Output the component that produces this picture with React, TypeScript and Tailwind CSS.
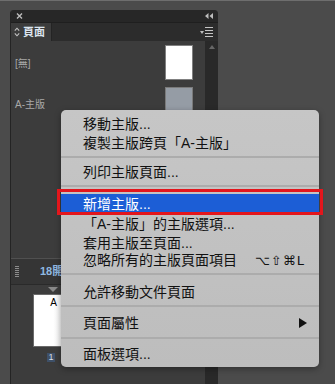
import React from "react";

type Row =
  | { kind: "item"; h: string; label: string; shortcut?: string; arrow?: boolean; active?: boolean }
  | { kind: "sep"; h: string; pt: string };

const rows: Row[] = [
  { kind: "item", h: "h-[19px]", label: "移動主版..." },
  { kind: "item", h: "h-[19px]", label: "複製主版跨頁「A-主版」" },
  { kind: "sep", h: "h-[10px]", pt: "pt-[4px]" },
  { kind: "item", h: "h-[20px]", label: "列印主版頁面..." },
  { kind: "sep", h: "h-[11px]", pt: "pt-[3px]" },
  { kind: "item", h: "h-[21px]", label: "新增主版...", active: true },
  { kind: "item", h: "h-[20px]", label: "「A-主版」的主版選項..." },
  { kind: "item", h: "h-[17px]", label: "套用主版至頁面..." },
  { kind: "item", h: "h-[18px]", label: "忽略所有的主版頁面項目", shortcut: "⌥⇧⌘L" },
  { kind: "sep", h: "h-[13px]", pt: "pt-[4px]" },
  { kind: "item", h: "h-[20px]", label: "允許移動文件頁面" },
  { kind: "sep", h: "h-[12px]", pt: "pt-[3px]" },
  { kind: "item", h: "h-[18px]", label: "頁面屬性", arrow: true },
  { kind: "sep", h: "h-[12px]", pt: "pt-[5px]" },
  { kind: "item", h: "h-[20px]", label: "面板選項..." },
];

export default function App() {
  return (
    <div className="relative w-[335px] h-[384px] overflow-hidden bg-[#4b4b4b] border-t border-[#6e6e6e] pl-[10px] pt-[9px] font-['Liberation_Sans','Noto_Sans_CJK_TC',sans-serif]">
      {/* Panel */}
      <div className="w-[208px] h-[380px] flex flex-col rounded-t-[4px] overflow-hidden bg-[#3c3c3c] border-l border-[#242424]">
        {/* title bar */}
        <div className="h-[12px] bg-[#272727] flex items-center justify-between pl-[5px] pr-[5px]">
          <svg width="7" height="6" viewBox="0 0 7 6">
            <path d="M1 0.5 L6 5.5 M6 0.5 L1 5.5" stroke="#bdbdbd" strokeWidth="1.4" />
          </svg>
          <svg width="8" height="6" viewBox="0 0 8 6">
            <path d="M0 3 L3.5 0 L3.5 6 Z M4.5 3 L8 0 L8 6 Z" fill="#bdbdbd" />
          </svg>
        </div>
        {/* tab row */}
        <div className="h-[19px] bg-[#2c2c2c] flex items-stretch border-t border-[#1f1f1f]">
          <div className="w-[41px] bg-[#3c3c3c] flex items-center gap-[3px] pl-[3px] border-r border-[#242424]">
            <svg width="6" height="10" viewBox="0 0 6 10">
              <path d="M0.8 3.6 L3 1.2 L5.2 3.6 M0.8 6.4 L3 8.8 L5.2 6.4" stroke="#c4c4c4" strokeWidth="1.1" fill="none" />
            </svg>
            <span className="text-[11px] leading-none font-bold text-[#dbe4ee]">頁面</span>
          </div>
          <div className="flex-1 flex items-center justify-end pr-[5px] gap-[1px]">
            <svg width="4" height="3" viewBox="0 0 4 3">
              <path d="M0 0 L4 0 L2 3 Z" fill="#bdbdbd" />
            </svg>
            <div className="flex flex-col gap-[2px]">
              <div className="w-[8px] h-[1px] bg-[#c4c4c4]" />
              <div className="w-[8px] h-[1px] bg-[#c4c4c4]" />
              <div className="w-[8px] h-[1px] bg-[#c4c4c4]" />
              <div className="w-[8px] h-[1px] bg-[#c4c4c4]" />
            </div>
          </div>
        </div>
        {/* body */}
        <div className="flex-1 flex">
          <div className="flex-1 flex flex-col">
            {/* masters */}
            <div className="h-[217px] flex flex-col">
              <div className="h-[42px] flex items-center justify-between pl-[4px] pr-[12px]">
                <span className="text-[10px] text-[#a9a9a9] mt-[3px]">[無]</span>
                <div className="w-[28px] h-[35px] bg-white border border-[#808080]" />
              </div>
              <div className="h-[42px] flex items-center justify-between pl-[4px] pr-[12px]">
                <span className="text-[10px] text-[#a9a9a9]">A-主版</span>
                <div className="w-[28px] h-[35px] bg-[#959ca5] border border-[#7a7a7a]" />
              </div>
            </div>
            {/* divider row */}
            <div className="h-[27px] bg-[#353535] border-t border-[#505050] border-b border-b-[#2a2a2a] flex items-center pl-[4px] gap-[21px]">
              <svg width="4" height="11" viewBox="0 0 4 11">
                {[0, 2, 4, 6, 8, 10].map((y) => (
                  <rect key={y} x="0" y={y} width="4" height="1" fill="#8c8c8c" />
                ))}
              </svg>
              <span className="w-[21px] overflow-hidden text-[11px] font-bold text-[#8fb9e2] whitespace-nowrap">18開</span>
            </div>
            {/* pages */}
            <div className="flex-1 flex flex-col pl-[22px] pt-[2px]">
              <svg width="10" height="5" viewBox="0 0 10 5" className="ml-[15px]">
                <path d="M0 0 L10 0 L5 5 Z" fill="#8a8a8a" />
              </svg>
              <div className="mt-[2px] w-[40px] h-[53px] bg-gradient-to-r from-white via-white to-[#e2e2e2] border border-[#6a6a6a] flex justify-center">
                <span className="text-[10px] leading-none text-black mt-[3px] ml-[1px]">A</span>
              </div>
              <div className="mt-[6px] ml-[14px] w-[8px] h-[9px] bg-[#3e5068] flex items-center justify-center">
                <span className="text-[9px] leading-none text-[#d8dde4]">1</span>
              </div>
            </div>
          </div>
          {/* scrollbar */}
          <div className="w-[13px] bg-[#292929] flex justify-center pt-[4px]">
            <svg width="6" height="4" viewBox="0 0 6 4">
              <path d="M0 4 L3 0 L6 4 Z" fill="#666" />
            </svg>
          </div>
        </div>
      </div>

      {/* Context menu */}
      <div className="absolute left-[61px] top-[109px] w-[258px] h-[257px] rounded-[5px] bg-gradient-to-b from-[#c6c6c6] to-[#bdbdbd] shadow-[0_2px_6px_rgba(0,0,0,0.35)] pt-[4px] flex flex-col">
        {rows.map((r, i) =>
          r.kind === "sep" ? (
            <div key={i} className={`${r.h} ${r.pt}`}>
              <div className="h-[2px] bg-[#acacac]" />
            </div>
          ) : (
            <div key={i} className={`${r.h} flex items-stretch`}>
              <div
                className={`flex-1 flex items-center pl-[22px] pr-[14px] text-[14px] leading-none ${
                  r.active ? "bg-[#1c5ed6] text-white my-[1px]" : "text-[#111]"
                }`}
              >
                <span className="flex-1 whitespace-nowrap">{r.label}</span>
                {r.shortcut && (
                  <span className="font-['DejaVu_Sans',sans-serif] text-[13px] tracking-[1px]">{r.shortcut}</span>
                )}
                {r.arrow && (
                  <svg width="8" height="10" viewBox="0 0 8 10" className="mr-[-2px]">
                    <path d="M0 0 L8 5 L0 10 Z" fill="#111" />
                  </svg>
                )}
              </div>
            </div>
          )
        )}
      </div>

      {/* red highlight outline */}
      <div className="absolute left-[57px] top-[188px] w-[266px] h-[26px] border-[3px] border-[#e3161c]" />
    </div>
  );
}
